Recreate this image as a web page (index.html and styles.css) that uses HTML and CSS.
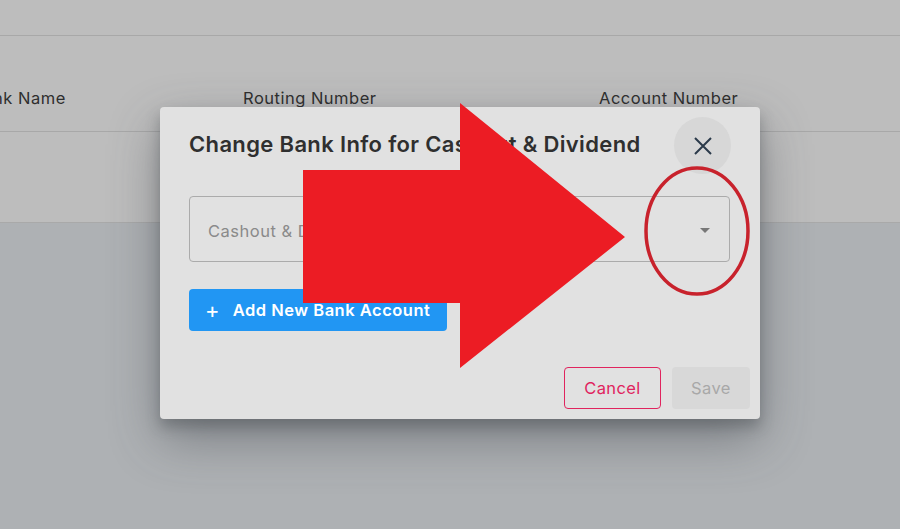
FILE: index.html
```html
<!DOCTYPE html>
<html lang="en">
<head>
  <meta charset="UTF-8">
  <meta name="viewport" content="width=device-width, initial-scale=1.0">
  <title>Bank Info</title>
  <link rel="stylesheet" href="styles.css">
</head>
<body>

  <div class="card">
    <div class="card-top"></div>
    <div class="table-head">
      <span class="col col-bank">Bank Name</span>
      <span class="col col-routing">Routing Number</span>
      <span class="col col-account">Account Number</span>
    </div>
  </div>

  <div class="modal">
    <div class="modal-head">
      <p class="modal-title">Change Bank Info for Cashout &amp; Dividend</p>
      <button class="close-button">
        <svg width="22" height="22" viewBox="0 0 22 22">
          <path d="M3 3 L19 19 M19 3 L3 19" stroke="#2b3a4a" stroke-width="2" fill="none"/>
        </svg>
      </button>
    </div>

    <div class="select">
      <span class="select-text">Cashout &amp; Dividend</span>
      <span class="select-arrow"></span>
    </div>

    <button class="add-button"><span class="plus">+</span> Add New Bank Account</button>

    <div class="modal-actions">
      <button class="cancel-button">Cancel</button>
      <button class="save-button">Save</button>
    </div>
  </div>

  <svg class="markup" width="900" height="529" viewBox="0 0 900 529">
    <polygon points="303,170 460,170 460,103 625,237 460,368 460,303 303,303" fill="#ec1c24"/>
    <ellipse cx="697" cy="231" rx="51" ry="63" fill="none" stroke="#c8222c" stroke-width="3.5"/>
  </svg>

</body>
</html>
```

FILE: styles.css
```css
body {
  margin: 0;
  background-color: #aeb1b4;
  font-family: Inter, "Noto Sans", sans-serif;
  color: #2e2e2e;
  height: 529px;
  overflow: hidden;
}

.card {
  background-color: #bdbdbd;
  height: 222px;
  border-bottom: 1px solid #a9a9a9;
}

.card-top {
  height: 35px;
  border-bottom: 1px solid #a8a8a8;
}

.table-head {
  position: relative;
  height: 95px;
  border-bottom: 1px solid #a8a8a8;
}

.col {
  position: absolute;
  top: 52px;
  font-size: 16.5px;
  letter-spacing: 0.5px;
}

.col-bank {
  left: -28px;
}

.col-routing {
  left: 243px;
}

.col-account {
  left: 599px;
}

.modal {
  position: absolute;
  left: 160px;
  top: 107px;
  width: 600px;
  height: 312px;
  box-sizing: border-box;
  padding: 10px 10px 10px 29px;
  background-color: #e1e1e1;
  border-radius: 4px;
  box-shadow: 0 20px 50px rgba(60, 65, 70, 0.45), 0 8px 14px rgba(60, 65, 70, 0.35);
}

.modal-head {
  display: flex;
  align-items: center;
  justify-content: space-between;
  padding-right: 19px;
}

.modal-title {
  margin: 0 0 3px;
  font-size: 22px;
  font-weight: 600;
  letter-spacing: 0.35px;
  color: #2f2f2f;
}

.close-button {
  width: 57px;
  height: 57px;
  border: none;
  border-radius: 50%;
  background-color: #d7d7d7;
  display: flex;
  align-items: center;
  justify-content: center;
  padding: 0;
}

.select {
  margin-top: 22px;
  width: 541px;
  height: 66px;
  box-sizing: border-box;
  border: 1px solid #ababab;
  border-radius: 4px;
  display: flex;
  align-items: center;
  justify-content: space-between;
  padding: 3px 19px 0 18px;
}

.select-text {
  font-size: 16.5px;
  letter-spacing: 0.5px;
  color: #8a8a8a;
}

.select-arrow {
  width: 0;
  height: 0;
  border-left: 5px solid transparent;
  border-right: 5px solid transparent;
  border-top: 5px solid #777;
}

.add-button {
  margin-top: 27px;
  width: 258px;
  height: 42px;
  border: none;
  border-radius: 4px;
  background-color: #2196f3;
  color: #fff;
  font-family: inherit;
  font-size: 16.5px;
  font-weight: 600;
  letter-spacing: 0.5px;
  text-align: left;
  padding-left: 16px;
}

.plus {
  font-size: 22px;
  font-weight: 400;
  margin-right: 8px;
  vertical-align: -2px;
}

.modal-actions {
  display: flex;
  justify-content: flex-end;
  gap: 11px;
  margin-top: 36px;
}

.modal-actions button {
  height: 42px;
  border-radius: 4px;
  font-family: inherit;
  font-size: 16.5px;
  letter-spacing: 0.4px;
}

.cancel-button {
  width: 97px;
  background-color: transparent;
  border: 1px solid #e0245e;
  color: #e0245e;
}

.save-button {
  width: 78px;
  background-color: #d8d8d8;
  border: none;
  color: #a8a8a8;
}

.markup {
  position: absolute;
  left: 0;
  top: 0;
}
```
